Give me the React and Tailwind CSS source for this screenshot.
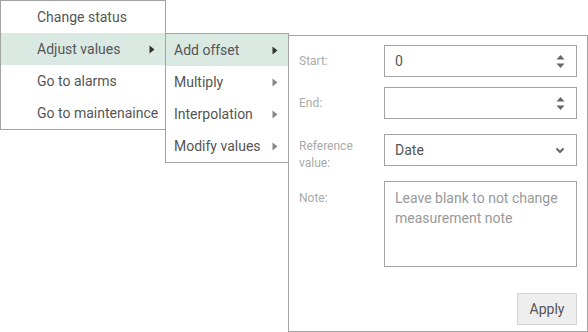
import React from 'react';

const font = { fontFamily: 'Roboto, "Liberation Sans", sans-serif' };

function Caret({ dark }) {
  return (
    <svg width="6" height="9" viewBox="0 0 6 9" className={dark ? 'text-[#333]' : 'text-[#888]'}>
      <path d="M0.5 0.5 L5.5 4.5 L0.5 8.5 Z" fill="currentColor" />
    </svg>
  );
}

function Spinner() {
  return (
    <svg width="9" height="15" viewBox="0 0 9 15" className="text-[#666]">
      <path d="M0.5 5.5 L4.5 1 L8.5 5.5 Z" fill="currentColor" />
      <path d="M0.5 9.5 L4.5 14 L8.5 9.5 Z" fill="currentColor" />
    </svg>
  );
}

function Chevron() {
  return (
    <svg width="10" height="7" viewBox="0 0 10 7" className="text-[#666]">
      <path d="M1.5 1.5 L5 5 L8.5 1.5" fill="none" stroke="currentColor" strokeWidth="2" />
    </svg>
  );
}

function MenuItem({ label, active, arrow, pad }) {
  return (
    <div
      className={`flex items-center h-8 pr-[10px] text-[14px] text-[#555] ${pad} ${
        active ? 'bg-[#dbe9e3]' : 'bg-white'
      }`}
    >
      <span className="flex-1 whitespace-nowrap">{label}</span>
      {arrow && <Caret dark={active} />}
    </div>
  );
}

export default function App() {
  return (
    <div className="relative w-[588px] h-[332px] bg-white overflow-hidden" style={font}>
      {/* Main context menu */}
      <div className="absolute left-0 top-0 w-[166px] border border-[#a3a3a3] bg-white z-20">
        <MenuItem label="Change status" pad="pl-[36px]" />
        <MenuItem label="Adjust values" pad="pl-[36px]" active arrow />
        <MenuItem label="Go to alarms" pad="pl-[36px]" />
        <MenuItem label="Go to maintenaince" pad="pl-[36px]" />
      </div>

      {/* Submenu */}
      <div className="absolute left-[165px] top-[33px] w-[124px] border border-[#a3a3a3] bg-white z-20">
        <MenuItem label="Add offset" pad="pl-[8px]" active arrow />
        <MenuItem label="Multiply" pad="pl-[8px]" arrow />
        <MenuItem label="Interpolation" pad="pl-[8px]" arrow />
        <MenuItem label="Modify values" pad="pl-[8px]" arrow />
      </div>

      {/* Offset form */}
      <div className="absolute left-[288px] top-[35px] w-[300px] h-[297px] border border-[#a3a3a3] bg-white z-10 pt-[9px] pl-[10px] pr-[10px]">
        <div className="flex items-center h-8">
          <span className="w-[85px] text-[12px] text-[#aaa]">Start:</span>
          <div className="flex-1 h-8 border border-[#a3a3a3] flex items-center pl-[10px] pr-[11px]">
            <span className="flex-1 text-[14px] text-[#555]">0</span>
            <Spinner />
          </div>
        </div>

        <div className="flex items-center h-8 mt-[10px]">
          <span className="w-[85px] text-[12px] text-[#aaa]">End:</span>
          <div className="flex-1 h-8 border border-[#a3a3a3] flex items-center pl-[10px] pr-[11px]">
            <span className="flex-1" />
            <Spinner />
          </div>
        </div>

        <div className="flex items-start mt-[15px]">
          <span className="w-[85px] pt-[4px] text-[12px] leading-[17px] text-[#aaa]">
            Reference
            <br />
            value:
          </span>
          <div className="flex-1 h-8 border border-[#a3a3a3] flex items-center pl-[10px] pr-[11px]">
            <span className="flex-1 text-[14px] text-[#555]">Date</span>
            <Chevron />
          </div>
        </div>

        <div className="flex items-start mt-[9px]">
          <span className="w-[85px] pt-[9px] text-[12px] leading-[17px] text-[#aaa]">Note:</span>
          <div className="flex-1 h-[86px] border border-[#a3a3a3] pl-[10px] pr-[8px] pt-[6px] text-[14px] leading-[20px] text-[#999]">
            Leave blank to not change measurement note
          </div>
        </div>

        <div className="flex justify-end mt-[26px]">
          <button className="w-[60px] h-8 border border-[#d4d4d4] bg-[#eeeeee] text-[14px] text-[#555]">
            Apply
          </button>
        </div>
      </div>
    </div>
  );
}
